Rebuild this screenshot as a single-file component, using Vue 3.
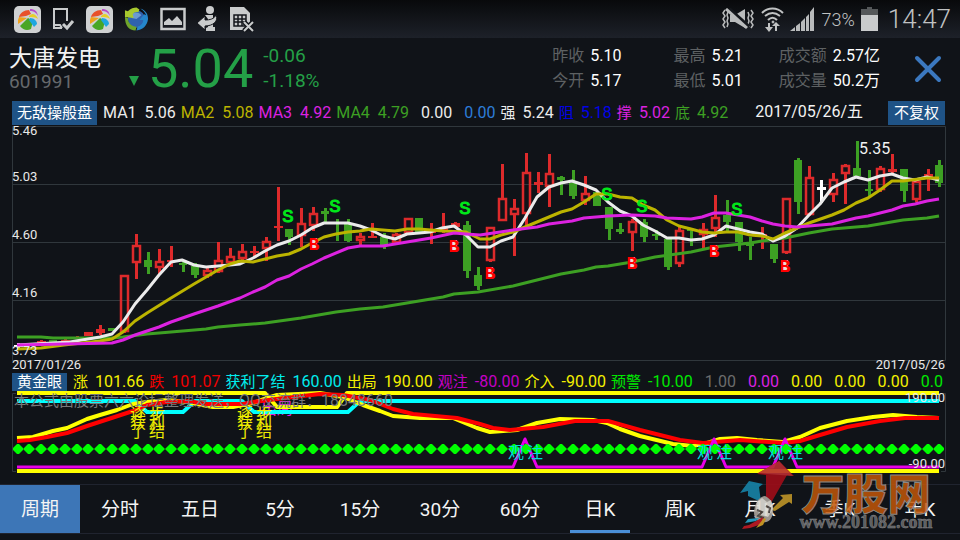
<script setup>
import { ref } from 'vue'

const stats = [
  { label: '昨收', value: '5.10' },
  { label: '最高', value: '5.21' },
  { label: '成交额', value: '2.57亿' },
  { label: '今开', value: '5.17' },
  { label: '最低', value: '5.01' },
  { label: '成交量', value: '50.2万' }
]

const maLegend = [
  { label: 'MA1', value: '5.06', tone: 'white' },
  { label: 'MA2', value: '5.08', tone: 'olive' },
  { label: 'MA3', value: '4.92', tone: 'magenta' },
  { label: 'MA4', value: '4.79', tone: 'green' },
  { label: '', value: '0.00', tone: 'white' },
  { label: '', value: '0.00', tone: 'sky' },
  { label: '强', value: '5.24', tone: 'white' },
  { label: '阻', value: '5.18', tone: 'navy' },
  { label: '撑', value: '5.02', tone: 'magenta' },
  { label: '底', value: '4.92', tone: 'green' }
]

const goldLegend = [
  { label: '涨', value: '101.66', tone: 'yellow' },
  { label: '跌', value: '101.07', tone: 'red' },
  { label: '获利了结', value: '160.00', tone: 'cyan' },
  { label: '出局', value: '190.00', tone: 'yellow' },
  { label: '观注', value: '-80.00', tone: 'purple' },
  { label: '介入', value: '-90.00', tone: 'yellow' },
  { label: '预警', value: '-10.00', tone: 'lime' },
  { label: '', value: '1.00', tone: 'gray' },
  { label: '', value: '0.00', tone: 'magenta' },
  { label: '', value: '0.00', tone: 'yellow' },
  { label: '', value: '0.00', tone: 'yellow' },
  { label: '', value: '0.00', tone: 'yellow' },
  { label: '', value: '0.0', tone: 'lime' }
]

const tabs = ['周期', '分时', '五日', '5分', '15分', '30分', '60分', '日K', '周K', '月K', '季K', '年K']
const active = ref('日K')

// kind, high, body top, body bottom, low
const rows = [
  ['w', 343, 345, 347, 348], ['r', 343, 343, 345, 346], ['r', 340, 341, 343, 345], ['g', 340, 340, 342, 342],
  ['r', 339, 340, 342, 343], ['r', 336, 337, 339, 339], ['r', 332, 332, 336, 336], ['r', 325, 329, 333, 335],
  ['g', 328, 328, 331, 331], ['r', 275, 275, 332, 333], ['r', 234, 245, 263, 279], ['g', 252, 260, 267, 274],
  ['r', 249, 261, 268, 275], ['r', 246, 260, 262, 267], ['g', 262, 263, 265, 272], ['g', 263, 266, 275, 278],
  ['r', 268, 270, 276, 278], ['r', 242, 260, 272, 273], ['r', 248, 256, 263, 265], ['r', 244, 251, 259, 260],
  ['r', 246, 251, 253, 257], ['r', 237, 241, 249, 261], ['r', 187, 226, 228, 241], ['g', 229, 229, 237, 245],
  ['r', 208, 223, 236, 247], ['r', 207, 213, 226, 231], ['g', 208, 211, 214, 223], ['g', 219, 222, 224, 241],
  ['g', 219, 223, 241, 242], ['r', 233, 236, 241, 245], ['r', 223, 236, 238, 238], ['g', 233, 237, 245, 249],
  ['r', 233, 234, 243, 245], ['r', 218, 218, 233, 233], ['g', 218, 218, 232, 232], ['r', 223, 231, 233, 244],
  ['r', 213, 227, 230, 233], ['r', 222, 223, 227, 228], ['g', 221, 225, 271, 278], ['g', 267, 275, 286, 290],
  ['r', 227, 227, 261, 262], ['r', 164, 198, 221, 221], ['r', 199, 208, 215, 256], ['r', 153, 172, 214, 225],
  ['r', 172, 182, 185, 193], ['r', 154, 173, 187, 207], ['g', 176, 177, 180, 195], ['g', 170, 183, 196, 199],
  ['r', 176, 193, 201, 205], ['g', 192, 192, 206, 206], ['g', 207, 207, 229, 240], ['g', 223, 229, 232, 234],
  ['r', 219, 221, 233, 251], ['g', 219, 222, 237, 242], ['g', 230, 234, 236, 240], ['g', 239, 239, 267, 270],
  ['r', 226, 230, 264, 267], ['g', 229, 229, 231, 246], ['r', 223, 229, 235, 248], ['r', 195, 217, 229, 237],
  ['g', 200, 215, 222, 231], ['g', 222, 222, 242, 251], ['g', 237, 243, 246, 260], ['r', 227, 234, 236, 249],
  ['g', 244, 244, 259, 263], ['r', 198, 198, 253, 254], ['g', 158, 160, 202, 214], ['r', 166, 177, 215, 216],
  ['w', 180, 187, 190, 203], ['r', 173, 179, 195, 202], ['r', 164, 165, 174, 204], ['g', 141, 168, 176, 178],
  ['g', 170, 189, 191, 197], ['r', 166, 168, 190, 192], ['r', 154, 169, 172, 173], ['g', 169, 169, 191, 202],
  ['r', 181, 181, 200, 202], ['r', 169, 174, 177, 191], ['g', 160, 165, 183, 187]
]
const colors = { r: '#dd2a2b', g: '#3da023', w: '#ffffff' }
const slot = i => Math.round(17.5 + i * 11.82)
const candles = rows.map(([kind, high, top, bottom, low], i) => ({
  x: slot(i), kind, high, top, bottom, low, color: colors[kind], hollow: kind === 'r' && bottom - top >= 5
}))

const grid = [184, 242, 300]
const prices = [
  { y: 135, text: '5.46' }, { y: 181, text: '5.03' }, { y: 239, text: '4.60' },
  { y: 297, text: '4.16' }, { y: 355, text: '3.73' }
]
const averages = [
  { color: '#3da023', points: '17,337 41,337 53,338 112,338 123,337 147,334 171,332 206,329 218,327 240,325 265,323 301,318 336,312 360,309 383,307 407,303 431,299 443,297 454,294 478,292 513,286 537,280 561,274 584,270 596,267 608,266 632,262 655,257 691,252 714,247 750,243 762,241 785,238 809,233 832,229 868,226 903,220 927,218 939,216' },
  { color: '#ebebeb', points: '17,345 70,342 100,337 112,334 123,322 135,304 147,290 159,275 171,262 182,260 194,265 206,267 218,266 230,265 240,264 253,258 265,251 277,245 289,241 301,235 312,228 324,223 348,223 360,226 371,230 383,236 395,239 407,234 419,233 430,232 442,228 454,226 466,235 478,247 490,247 501,241 513,237 525,218 537,197 549,187 561,183 572,181 584,185 596,190 608,202 620,211 632,216 643,225 655,231 667,238 679,238 691,240 702,239 714,235 726,226 738,229 750,232 762,234 773,241 785,236 797,228 809,215 820,204 832,188 844,182 856,177 868,180 880,176 892,174 903,178 915,180 927,177 939,180' },
  { color: '#bcb400', points: '17,349 41,348 64,345 100,341 112,339 123,332 135,321 147,313 171,298 194,284 206,277 218,270 230,264 240,261 253,262 277,256 289,254 301,249 312,243 324,237 336,234 348,232 360,231 371,229 395,231 407,229 419,229 443,231 466,232 480,239 490,239 501,235 513,232 525,227 537,222 549,217 561,212 572,209 584,202 596,194 608,194 620,197 632,198 643,205 655,210 667,220 679,226 691,229 702,232 714,233 726,232 738,232 750,235 762,236 773,239 785,233 797,228 809,223 832,215 844,210 856,203 868,198 880,190 892,181 903,181 927,178 939,178' },
  { color: '#dc22e0', points: '17,345 64,344 112,343 123,340 135,335 147,331 159,327 171,322 194,314 218,306 240,298 253,292 265,287 277,280 289,276 301,269 312,264 324,258 348,248 360,246 383,246 407,242 431,238 454,233 466,234 480,235 513,230 537,227 549,224 572,221 584,218 608,216 632,215 655,216 667,218 691,219 702,217 714,213 726,213 738,215 750,217 762,221 773,224 785,226 797,227 809,226 832,224 844,221 856,218 868,216 880,213 892,210 903,206 915,204 927,201 939,199' }
]
const sells = [[288, 222], [335, 212], [465, 214], [607, 200], [642, 212], [737, 215]]
const buys = [[314, 250], [454, 252], [490, 279], [632, 269], [714, 257], [785, 272]]

const oscillators = [
  { color: '#ff0', points: '17,393 265,393 277,407 337,407 347,393 939,393' },
  { color: '#0ff', points: '17,401 135,401 147,412 183,412 195,401 242,401 254,412 348,412 360,401 939,401' },
  { color: '#ff0', points: '17,438 33,437 53,431 67,428 87,419 100,415 117,410 133,404 147,402 167,400 187,402 197,404 213,407 233,407 253,403 267,398 277,395 320,393 343,397 363,405 380,411 393,416 420,418 453,418 477,428 490,432 517,430 537,423 560,419 593,420 607,423 620,429 640,436 673,444 693,446 707,443 720,439 737,438 757,440 783,442 800,437 820,428 847,421 873,417 893,415 917,417 939,418' },
  { color: '#f00', points: '17,441 30,440 47,437 67,433 87,426 133,411 147,405 167,402 187,401 207,404 243,404 253,402 277,399 320,394 343,395 370,400 393,409 413,414 457,418 480,424 493,428 510,430 543,427 575,421 608,421 640,430 680,440 703,443 740,440 783,443 800,441 820,435 847,427 880,421 905,418 939,418' }
]
const watch = [[508, 528], [697, 717], [768, 788]]
const notes = [
  [130, 419, '逐'], [130, 428, '获'], [130, 437, '了'], [149, 419, '步'], [149, 428, '利'], [149, 437, '结'],
  [237, 419, '逐'], [237, 428, '获'], [237, 437, '了'], [256, 419, '步'], [256, 428, '利'], [256, 437, '结']
]
</script>

<template>
  <div class="app">
    <header class="status">
      <div class="icons">
        <svg v-for="n in 2" :key="n" class="icon" :class="'slot' + n" viewBox="0 0 27 27" aria-hidden="true">
          <rect width="27" height="27" rx="5" fill="#cfd1d2" />
          <path d="M5 11C6 7 10 4 15 4l2 4-5 2z" fill="#e8502a" />
          <path d="M16 3c5 0 7 2 8 7-2-4-5-5-8-5z" fill="#b64bc8" />
          <path d="M4 14l1-3 8 1-9 6z" fill="#f0a21c" />
          <path d="M6 20l8-8 5 3-2 8c-4 2-8 1-11-3z" fill="#49a625" />
          <path d="M16 12c4 0 7 3 7 6l-3 3-5-7z" fill="#1ea7df" />
          <path d="M15 10l3-2c3 0 5 2 6 5-3-2-6-2-9-2z" fill="#e6cf25" />
        </svg>
        <svg class="icon doc" viewBox="0 0 23 24" fill="none" stroke="#c9cbcc" stroke-width="2" aria-hidden="true">
          <path d="M15 14V2H2v19h8M3 18h5l2 3" /><path d="M11 17l4 4 6-7" stroke-width="3" />
        </svg>
        <svg class="icon globe" viewBox="0 0 26 26" aria-hidden="true">
          <circle cx="13" cy="13" r="9" fill="#2f62ae" />
          <path d="M8 8c3-3 8-2 10 1l-5 4-5-1z" fill="#6c9bd0" />
          <path d="M1 4l3 1C7 2 10 1 13 1l3 2-1 3c-3-1-4 0-6 2l1 4-9-1z" fill="#a8c92e" />
          <path d="M1 11l3 1c0 5 4 9 9 9l-1 4C5 25 1 20 1 11z" fill="#6fa52c" />
          <path d="M17 2c6 2 8 6 8 11-1 7-5 11-12 12l1-4c4-1 6-4 6-7h-4l5-6 2 1c-1-3-3-5-6-7z" fill="#2586cb" />
        </svg>
        <svg class="icon pic" viewBox="0 0 26 24" aria-hidden="true">
          <rect x="1.500" y="2" width="23" height="20" fill="none" stroke="#c9cbcc" stroke-width="2.500" />
          <path d="M4 18v-3l5-4 3 3 5-5 5 6v3z" fill="#c9cbcc" />
        </svg>
        <svg class="icon info" viewBox="0 0 22 26" fill="#c9cbcc" aria-hidden="true">
          <circle cx="13" cy="4" r="4" /><path d="M8 9h8v12h2v4H9v-3l2-1v-8z" />
          <path d="M0 17l8-7v4c5 0 9-1 11-5 3 6-3 11-11 11v4z" stroke="#14171c" stroke-width="1" />
        </svg>
        <svg class="icon sim" viewBox="0 0 25 26" aria-hidden="true">
          <path d="M0 1h14l6 6v17H0z" fill="#c9cbcc" />
          <path d="M4 9h12v11H4zM4 13h12M4 16h12M8 9v11M12 9v11" fill="none" stroke="#14171c" stroke-width="1.500" />
          <path d="M14 16l9 9M23 16l-9 9" stroke="#14171c" stroke-width="5" />
          <path d="M14 16l9 9M23 16l-9 9" stroke="#c9cbcc" stroke-width="2" />
        </svg>
      </div>
      <div class="system">
        <svg class="mute" viewBox="0 0 32 22" aria-hidden="true">
          <path d="M3 2l-2 3 2 3-2 3 2 3-2 3 2 3M6 4L5 7l1 3-1 3 1 3-1 3M29 2l2 3-2 3 2 3-2 3 2 3-2 3M26 4l1 3-1 3 1 3-1 3 1 3" fill="none" stroke="#b9bbbc" stroke-width="1.500" />
          <path d="M8 7h5l10-6v19l-10-6H8z" fill="#b9bbbc" />
          <path d="M7 1l20 18" stroke="#14171c" stroke-width="4" /><path d="M4 1l21 19" stroke="#b9bbbc" stroke-width="3" />
        </svg>
        <svg class="wifi" viewBox="0 0 24 27" fill="none" stroke="#c0c2c3" aria-hidden="true">
          <path d="M2 7c6-6 15-6 21 0M5 10c5-4 10-4 15 0M8 14c3-3 6-3 9 0" stroke-width="2" />
          <circle cx="13" cy="16" r="1" fill="#c0c2c3" />
          <path d="M9 17v6M16 19v6" stroke-width="2" /><path d="M5 21h8l-4 5zM12 20h8l-4-4z" fill="#c0c2c3" stroke="none" />
        </svg>
        <svg class="signal" viewBox="0 0 24 24" fill="#b9bbbc" aria-hidden="true">
          <path d="M0 24l5-4v4zM6 19l4-3v8H6zM11 15l4-4v13h-4zM16 10l3-3v17h-3zM20 5l4-5v24h-4z" />
        </svg>
        <span class="percent">73%</span>
        <svg class="battery" viewBox="0 0 17 24" aria-hidden="true">
          <path d="M6 0h5v2h6v6H0V2h6z" fill="#55585a" /><path d="M0 8h17v16H0z" fill="#c9cbcc" />
        </svg>
        <time class="clock">14:47</time>
      </div>
    </header>

    <section class="quote">
      <div class="name"><h1>大唐发电</h1><span>601991</span></div>
      <svg class="down" viewBox="0 0 10 10" aria-hidden="true"><path d="M0 0h10L5 10z" fill="#24a047" /></svg>
      <strong class="price">5.04</strong>
      <div class="change"><span>-0.06</span><span>-1.18%</span></div>
      <dl class="stats">
        <div v-for="s in stats" :key="s.label"><dt>{{ s.label }}</dt><dd>{{ s.value }}</dd></div>
      </dl>
      <button class="close" aria-label="关闭">
        <svg viewBox="0 0 28 28" aria-hidden="true"><path d="M3 3l22 22M25 3L3 25" stroke="#3b78bf" stroke-width="4" stroke-linecap="round" /></svg>
      </button>
    </section>

    <section class="legend main">
      <button class="tag">无敌操般盘</button>
      <ul>
        <li v-for="(m, i) in maLegend" :key="i" :class="m.tone"><span>{{ m.label }}</span><span>{{ m.value }}</span></li>
      </ul>
      <time>2017/05/26/五</time>
      <button class="tag wide">不复权</button>
    </section>

    <svg class="chart" viewBox="12 125 934 247" role="img" aria-label="日K">
      <path v-for="y in grid" :key="y" :d="`M12 ${y}.5H945`" class="line" />
      <path d="M12.500 360.500V126.500H945.500V360.500z" class="line" />
      <g v-for="c in candles" :key="c.x" :fill="c.color">
        <rect :x="c.x - 1" :y="c.high" width="3" :height="Math.max(c.top - c.high, 0)" />
        <rect :x="c.x - 1" :y="c.bottom" width="3" :height="Math.max(c.low - c.bottom, 0)" />
        <rect v-if="c.hollow" :x="c.x - 3" :y="c.top + 1" width="7" :height="c.bottom - c.top - 2" fill="none" :stroke="c.color" stroke-width="2.500" />
        <rect v-else :x="c.x - 4" :y="c.top" :width="c.kind === 'g' ? 8 : 9" :height="c.bottom - c.top" />
      </g>
      <polyline v-for="a in averages" :key="a.color" :points="a.points" :stroke="a.color" class="curve" stroke-width="3" />
      <text v-for="s in sells" :key="s[0]" :x="s[0]" :y="s[1]" class="sell">S</text>
      <g v-for="b in buys" :key="b[0]">
        <rect :x="b[0] - 4" :y="b[1] - 12" width="7" height="12" fill="#ecdcdc" />
        <text :x="b[0]" :y="b[1]" class="buy">B</text>
      </g>
      <text v-for="p in prices" :key="p.y" x="12" :y="p.y" class="axis">{{ p.text }}</text>
      <text x="12" y="369" class="axis">2017/01/26</text>
      <text x="945" y="369" class="axis end">2017/05/26</text>
      <text x="859" y="154" class="peak">5.35</text>
    </svg>

    <section class="legend sub">
      <button class="tag">黄金眼</button>
      <ul>
        <li v-for="(m, i) in goldLegend" :key="i" :class="m.tone"><span>{{ m.label }}</span><span>{{ m.value }}</span></li>
      </ul>
    </section>

    <svg class="chart" viewBox="12 391 934 88" role="img" aria-label="黄金眼">
      <path d="M16 393.500H12.500V471.500H16M941 393.500H945.500V471.500H941" class="line" />
      <text x="261" y="414" class="cn exit">出局</text>
      <polyline v-for="(o, i) in oscillators" :key="i" :points="o.points" :stroke="o.color" class="curve" stroke-width="4" />
      <path d="M17 467H513L525 439L537 467H702L714 439L726 467H773L785 439L797 467H939" stroke="#e800e8" stroke-width="3" class="curve" />
      <path d="M17 471H939" stroke="#ff0" stroke-width="4" />
      <path d="M17 449H939" stroke="#0f0" stroke-width="1" />
      <path v-for="(c, i) in candles" :key="i" :d="`M${c.x - 5} 448l4 -4h2l4 4v2l-4 4h-2l-4 -4z`" fill="#0f0" />
      <text v-for="(n, i) in notes" :key="i" :x="n[0]" :y="n[1]" class="cn note">{{ n[2] }}</text>
      <g v-for="w in watch" :key="w[0]" class="cn watch">
        <text :x="w[0]" y="458">观</text><text :x="w[1] - 1" y="458">注</text>
      </g>
      <text x="14" y="406" class="cn credit">本公式由股票六六论坛整理发送，<tspan class="latin">QQ</tspan>交流群：<tspan class="latin">18848660</tspan></text>
      <text x="945" y="402" class="axis end">190.00</text>
      <text x="945" y="468" class="axis end">-90.00</text>
    </svg>

    <nav class="tabs">
      <button v-for="(t, i) in tabs" :key="t" :class="{ period: i === 0, active: t === active }" @click="active = t">{{ t }}</button>
    </nav>

    <svg class="brand" viewBox="735 455 210 80" aria-hidden="true">
      <g opacity="0.9">
        <path d="M779 461l15 15-7-1-16 28-5-2V475l-9-1z" fill="#a00d18" />
        <path d="M779 461l-21 12 9 1 26 2z" fill="#b92d32" />
        <path d="M740 493l9-12 14 3-4 3 2 15-13-6v-5z" fill="#1784a8" />
        <path d="M771 510l12-12-3-3 12-1v10l-3-2-14 9z" fill="#bd9428" />
        <path d="M754 512c1-10 5-15 11-16 6 3 9 8 8 16-1 8-5 11-10 10-6 0-9-3-9-10z" fill="#aaa39b" />
        <path d="M757 502l5-4 5 4 4-2 2 9-5 8-7-2-5-6z" fill="#e0ddd6" />
        <path d="M757 510l5 2-4 4 6 2M766 506l4 2-1 5" stroke="#4c4541" stroke-width="2" fill="none" />
        <path d="M763 517l-14 8-5 1-2 3 8-1 12-4z" fill="#c01a24" /><path d="M759 518l-11 1-3 4 11-2z" fill="#2aa6cc" /><path d="M764 518l-8 10 7-3 3-6z" fill="#d4a025" />
      </g>
      <text x="866" y="510" class="cn brandname">万股网</text>
      <text x="866" y="528" class="brandurl">www.201082.com</text>
    </svg>
  </div>
</template>

<style>
body { margin: 0; background: #101318; }
</style>

<style scoped>
.app {
  position: relative;
  min-height: 100vh;
  overflow: hidden;
  background: #101318;
  color: #f2f2f2;
  font-family: Roboto, "Noto Sans CJK SC", sans-serif;
  font-size: 16px;
}
button { margin: 0; border: 0; padding: 0; background: none; color: inherit; font: inherit; cursor: pointer; }
ul, dl, dd, h1 { margin: 0; padding: 0; list-style: none; font-weight: 400; }

.status {
  display: flex;
  justify-content: space-between;
  align-items: center;
  height: 38px;
  padding: 0 9px 0 14px;
  box-sizing: border-box;
  background: linear-gradient(#08090b, #1d2129);
  color: #c0c2c3;
}
.icons, .system { display: flex; align-items: center; }
.icons { gap: 11px; }
.icon { flex: none; width: 27px; height: 27px; }
.slot1 { order: 1; }
.doc { order: 2; width: 23px; height: 24px; }
.slot2 { order: 3; }
.globe { order: 4; width: 25px; height: 26px; }
.pic { order: 5; width: 26px; height: 24px; }
.info { order: 6; width: 22px; height: 26px; }
.sim { order: 7; width: 25px; height: 26px; }
.system { gap: 6px; }
.mute { width: 32px; height: 22px; }
.wifi { width: 24px; height: 27px; }
.signal { width: 24px; height: 24px; }
.percent { margin-left: 2px; font-size: 18px; font-weight: 300; }
.battery { width: 17px; height: 24px; }
.clock { margin-left: 4px; font-size: 26px; font-weight: 300; }

.quote { display: flex; align-items: center; height: 62px; padding: 0 18px 0 9px; }
.name { width: 120px; padding-top: 2px; }
.name h1 { font-size: 23px; line-height: 24px; }
.name span { display: block; color: #66696c; font-size: 19px; line-height: 22px; }
.down { width: 10px; height: 10px; margin-top: 24px; }
.price { margin-left: 9px; font-size: 54px; font-weight: 400; line-height: 62px; color: #24a047; }
.change { display: flex; flex-direction: column; margin-left: 10px; padding-bottom: 2px; color: #24a047; font-size: 19px; line-height: 25px; }
.stats {
  display: grid;
  grid-template-columns: repeat(3, auto);
  column-gap: 52px;
  margin-left: auto;
  padding-bottom: 2px;
  line-height: 25px;
}
.stats div { display: flex; gap: 6px; }
.stats div:nth-child(3n) { margin-left: -16px; }
.stats dt { color: #5e6163; }
.stats dd { color: #fff; }
.close { display: flex; margin-left: 34px; }
.close svg { width: 28px; height: 28px; }

.legend { display: flex; align-items: center; padding: 0 15px 0 12px; white-space: nowrap; }
.legend ul { display: flex; flex: 1; gap: 5px; min-width: 0; margin-left: 6px; }
.legend li { display: flex; gap: 7px; }
.legend.main { height: 25px; line-height: 24px; }
.main li:nth-child(-n + 4) { gap: 8px; }
.legend.main time { margin-right: 25px; line-height: 22px; padding-bottom: 2px; }
.legend.sub { height: 19px; line-height: 18px; }
.tag { padding: 0 5px; background: #1f5386; color: #fff; font-size: 15px; line-height: 24px; }
.tag.wide { padding: 0 6px; }
.sub .tag { line-height: 18px; }
.main li:nth-child(n + 7) span:first-child, .sub li span:first-child { font-size: 15px; }
.white { color: #ececec; }
.olive { color: #bcb400; }
.magenta { color: #dc22e0; }
.green { color: #3da023; }
.sky { color: #2d7dd8; }
.navy { color: #0202e6; }
.yellow { color: #f4f000; }
.red { color: #f00000; }
.cyan { color: #00eeee; }
.purple { color: #c400c4; }
.lime { color: #00e800; }
.gray { color: #6c6c6c; }

.chart { display: block; width: calc(100% - 26px); margin-left: 12px; overflow: visible; }
.line { fill: none; stroke: #30373c; }
.curve { fill: none; stroke-linejoin: round; }
.axis { font-size: 13px; fill: #e8e8e8; }
.end { text-anchor: end; }
.peak { font-size: 16px; fill: #f2f2f2; }
.sell { font: 400 19px "Liberation Mono", monospace; fill: #00e81a; stroke: #00e81a; stroke-width: 1; text-anchor: middle; }
.buy { font: 700 18px "Liberation Mono", monospace; fill: #f00; text-anchor: middle; }
.cn { font-family: Roboto, "Noto Sans CJK SC", sans-serif; font-size: 16px; }
.exit { fill: #dc22e0; }
.note { fill: #f0ec00; }
.watch { fill: #00dcdc; }
.credit { font-size: 15px; fill: #77797a; }
.latin { font-size: 16px; }

.tabs {
  display: grid;
  grid-template-columns: repeat(12, 1fr);
  height: 50px;
  box-sizing: border-box;
  margin-top: 5px;
  border-top: 1px solid #20242f;
  border-bottom: 1px solid #20242f;
  font-size: 19px;
}
.tabs button { position: relative; padding-bottom: 3px; color: #f4f4f4; }
.tabs .period { background: #3d76b7; }
.tabs .active::after {
  content: "";
  position: absolute;
  right: 10px;
  bottom: 0;
  left: 10px;
  height: 3px;
  background: #4a8fd8;
}

.brand { position: absolute; right: 15px; bottom: 5px; width: 210px; height: 80px; pointer-events: none; }
.brandname {
  font-size: 43px;
  font-weight: 900;
  fill: #c45708;
  fill-opacity: 0.85;
  stroke: #8a8784;
  stroke-width: 1;
  text-anchor: middle;
}
.brandurl { font: 700 18px "Liberation Serif", serif; fill: #5c5d5f; stroke: #858688; stroke-width: 0.500; text-anchor: middle; }
</style>
